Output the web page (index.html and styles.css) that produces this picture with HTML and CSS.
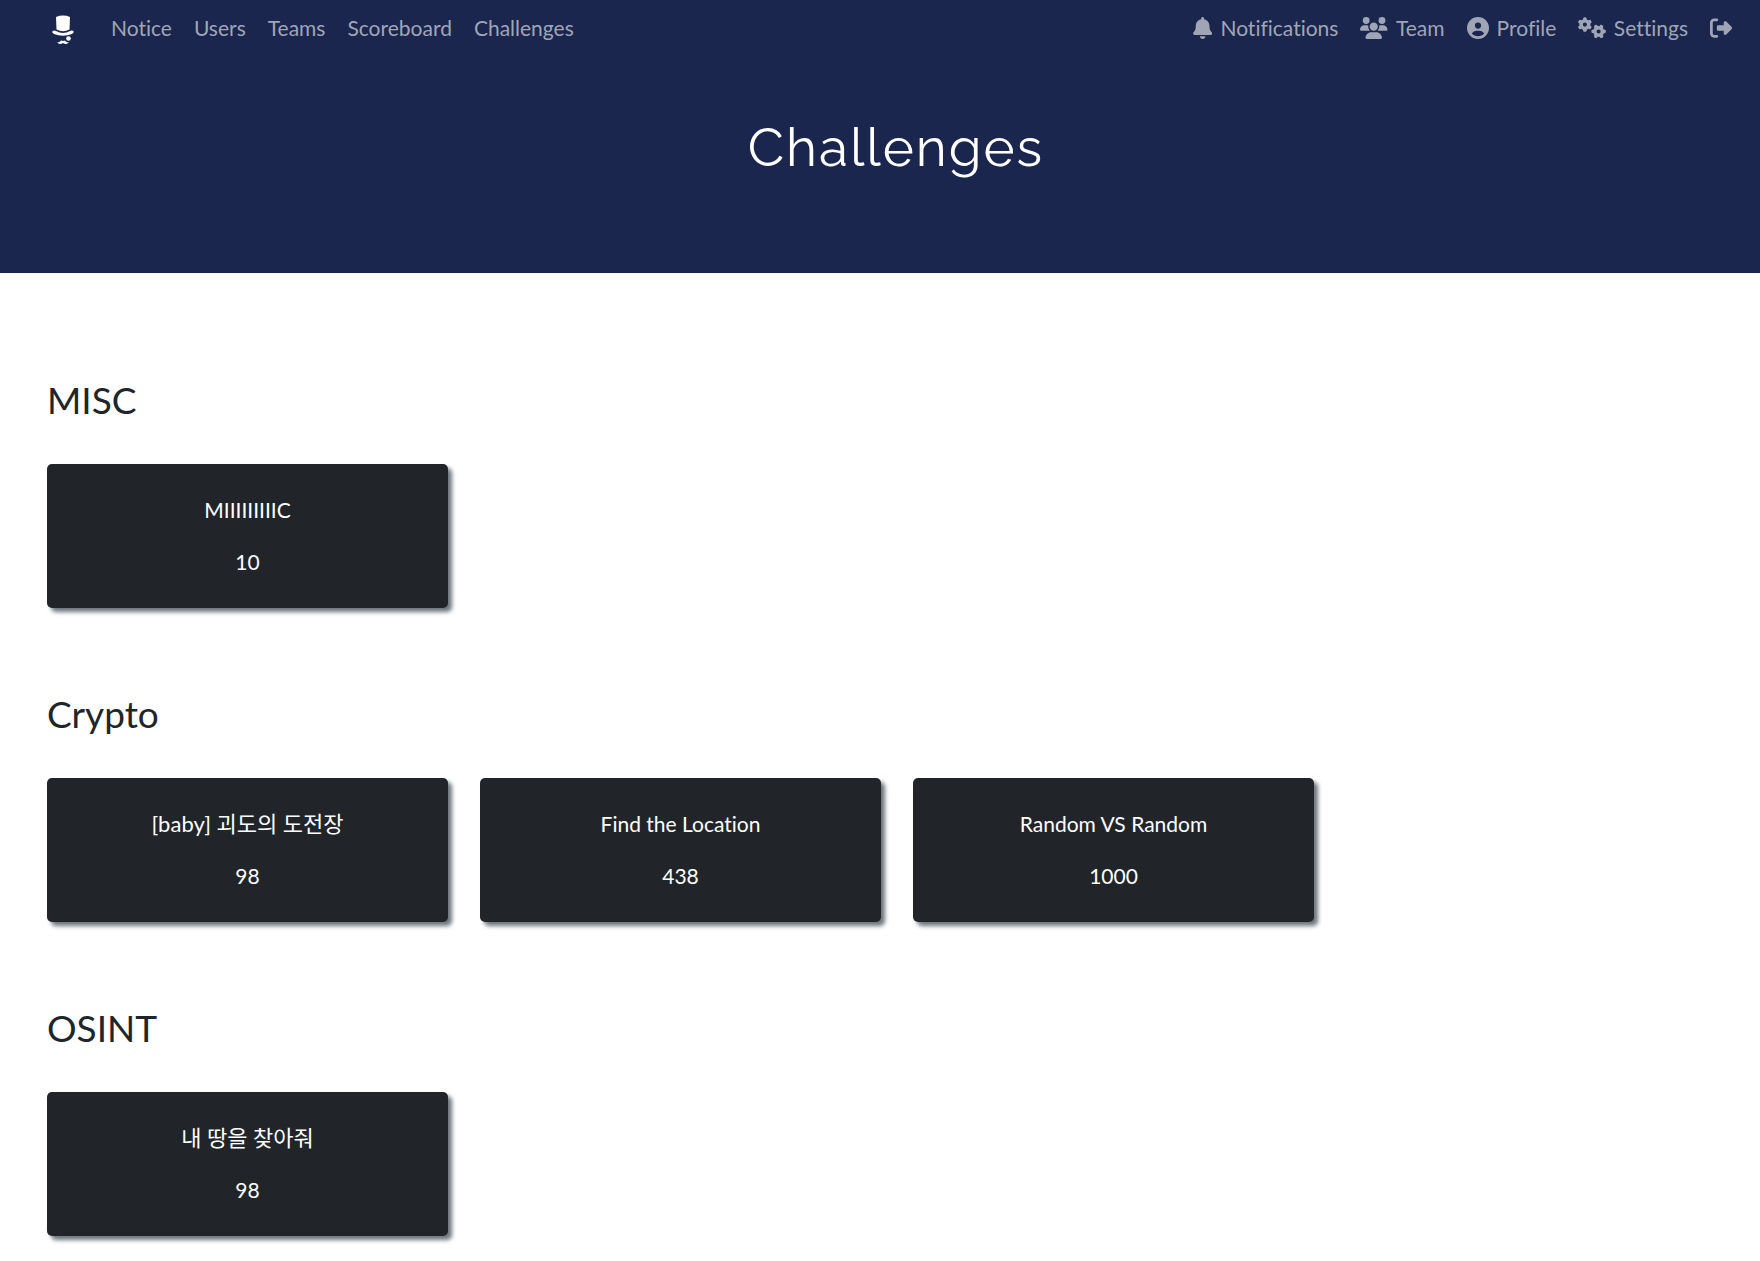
FILE: index.html
```html
<!DOCTYPE html>
<html lang="en">
<head>
<meta charset="utf-8">
<meta name="viewport" content="width=device-width, initial-scale=1">
<title>Challenges</title>
<link rel="stylesheet" href="styles.css">
</head>
<body>
<header class="masthead">
  <nav class="navbar" aria-label="Main">
    <a class="brand" href="#" aria-label="Home">
      <svg class="brand-logo" viewBox="0 -2 24 32" aria-hidden="true">
        <path d="M5 3Q12 .2 19 3L18.500 15.500Q12 19 5.500 15.500Z"/>
        <path d="M1.500 17Q3.500 16 5 17Q12 21 19 17Q20.500 16 22.500 17Q23.500 18.500 21 20Q12 23.500 3 20Q.5 18.500 1.500 17Z"/>
        <circle cx="17.500" cy="24.500" r="2.300"/>
        <path d="M6 28.500Q8.500 28.500 9.500 27Q11 26 12 27.300Q13 26 14.500 27Q15.500 28.500 18 28.500Q15.500 31 12 29Q8.500 31 6 28.500Z"/>
      </svg>
    </a>
    <ul class="nav-list">
      <li><a class="nav-link" href="#">Notice</a></li>
      <li><a class="nav-link" href="#">Users</a></li>
      <li><a class="nav-link" href="#">Teams</a></li>
      <li><a class="nav-link" href="#">Scoreboard</a></li>
      <li><a class="nav-link" href="#">Challenges</a></li>
    </ul>
    <ul class="nav-list nav-account">
      <li><a class="nav-link" href="#"><svg class="icon" viewBox="0 0 448 512" aria-hidden="true"><path d="M224 0c-17.700 0-32 14.300-32 32V51.200C119 66 64 130.600 64 208v18.800c0 47-17.300 92.400-48.500 127.600l-7.400 8.300c-8.400 9.400-10.400 22.900-5.300 34.400S19.400 416 32 416H416c12.600 0 24-7.400 29.200-18.900s3.100-25-5.300-34.400l-7.400-8.300C401.300 319.200 384 273.900 384 226.800V208c0-77.400-55-142-128-156.800V32c0-17.700-14.300-32-32-32zm45.300 493.300c12-12 18.700-28.300 18.700-45.300H224 160c0 17 6.700 33.300 18.700 45.300s28.300 18.700 45.300 18.700s33.300-6.700 45.300-18.700z"/></svg>Notifications</a></li>
      <li><a class="nav-link" href="#"><svg class="icon" viewBox="0 0 640 512" aria-hidden="true"><path d="M144 0a80 80 0 1 1 0 160A80 80 0 1 1 144 0zM512 0a80 80 0 1 1 0 160A80 80 0 1 1 512 0zM0 298.700C0 239.800 47.800 192 106.700 192h42.700c15.900 0 31 3.500 44.600 9.700c-1.300 7.200-1.900 14.700-1.900 22.300c0 38.200 16.800 72.500 43.300 96c-.2 0-.4 0-.7 0H21.300C9.600 320 0 310.400 0 298.700zM405.300 320c-.2 0-.4 0-.7 0c26.600-23.500 43.300-57.800 43.300-96c0-7.600-.7-15-1.900-22.300c13.600-6.300 28.700-9.700 44.600-9.700h42.700C592.200 192 640 239.800 640 298.700c0 11.800-9.600 21.300-21.300 21.300H405.300zM224 224a96 96 0 1 1 192 0 96 96 0 1 1 -192 0zM128 485.300C128 411.700 187.700 352 261.300 352H378.700C452.300 352 512 411.700 512 485.300c0 14.700-11.900 26.700-26.700 26.700H154.700c-14.700 0-26.700-11.900-26.700-26.700z"/></svg>Team</a></li>
      <li><a class="nav-link" href="#"><svg class="icon" viewBox="0 0 512 512" aria-hidden="true"><path d="M399 384.200C376.900 345.800 335.400 320 288 320H224c-47.400 0-88.900 25.800-111 64.200c35.200 39.200 86.200 63.800 143 63.800s107.800-24.700 143-63.800zM0 256a256 256 0 1 1 512 0A256 256 0 1 1 0 256zm256 16a72 72 0 1 0 0-144 72 72 0 1 0 0 144z"/></svg>Profile</a></li>
      <li><a class="nav-link" href="#"><svg class="icon" viewBox="0 0 640 512" aria-hidden="true">
        <defs>
          <path id="gear" d="M308.500 135.300c7.100-6.300 9.900-16.200 6.200-25c-2.300-5.300-4.800-10.500-7.600-15.500L304 89.400c-3-5-6.300-9.900-9.800-14.600c-5.700-7.600-15.700-10.100-24.700-7.100l-28.200 9.300c-10.700-8.800-23-16-36.200-20.900L199 27.100c-1.900-9.300-9.100-16.700-18.500-17.800C173.900 8.400 167.200 8 160.400 8h-.7c-6.800 0-13.500 .4-20.100 1.200c-9.400 1.100-16.600 8.600-18.500 17.800L115 56.100c-13.300 5-25.500 12.100-36.200 20.900L50.500 67.800c-9-3-19-.5-24.700 7.100c-3.500 4.700-6.800 9.600-9.900 14.600l-3 5.300c-2.800 5-5.300 10.200-7.600 15.600c-3.700 8.700-.9 18.600 6.200 25l22.200 19.800C32.600 161.900 32 168.900 32 176s.6 14.100 1.700 20.900L11.500 216.700c-7.100 6.300-9.900 16.200-6.200 25c2.300 5.300 4.800 10.500 7.600 15.600l3 5.200c3 5.100 6.300 9.900 9.900 14.600c5.700 7.600 15.700 10.100 24.700 7.100l28.200-9.300c10.700 8.800 23 16 36.200 20.900l6.100 29.100c1.900 9.300 9.100 16.700 18.500 17.800c6.700 .8 13.500 1.200 20.400 1.200s13.700-.4 20.400-1.200c9.400-1.100 16.600-8.600 18.500-17.800l6.100-29.100c13.300-5 25.500-12.100 36.200-20.900l28.200 9.300c9 3 19 .5 24.700-7.100c3.500-4.700 6.800-9.500 9.800-14.600l3.100-5.400c2.800-5 5.300-10.200 7.600-15.500c3.700-8.700 .9-18.600-6.200-25l-22.200-19.800c1.100-6.800 1.700-13.800 1.700-20.900s-.6-14.100-1.700-20.900l22.200-19.800zM112 176a48 48 0 1 1 96 0 48 48 0 1 1 -96 0z"/>
        </defs>
        <use href="#gear"/>
        <use href="#gear" transform="translate(480 336) rotate(90) translate(-160 -176)"/>
      </svg>Settings</a></li>
      <li><a class="nav-link" href="#" aria-label="Logout"><svg class="icon" viewBox="0 0 512 512" aria-hidden="true"><path d="M377.900 105.900L500.700 228.700c7.200 7.200 11.300 17.100 11.300 27.300s-4.100 20.100-11.300 27.300L377.900 406.100c-6.400 6.400-15 9.900-24 9.900c-18.700 0-33.900-15.200-33.900-33.900l0-62.100-128 0c-17.700 0-32-14.300-32-32l0-64c0-17.700 14.300-32 32-32l128 0 0-62.100c0-18.700 15.200-33.900 33.900-33.900c9 0 17.600 3.600 24 9.900zM160 96L96 96c-17.700 0-32 14.300-32 32l0 256c0 17.700 14.300 32 32 32l64 0c17.700 0 32 14.300 32 32s-14.300 32-32 32l-64 0c-53 0-96-43-96-96L0 128C0 75 43 32 96 32l64 0c17.700 0 32 14.300 32 32s-14.300 32-32 32z"/></svg></a></li>
    </ul>
  </nav>
  <h1 class="page-title">Challenges</h1>
</header>
<main class="board">
  <section class="category">
    <h2 class="category-name">MISC</h2>
    <div class="cards">
      <button class="card" type="button"><span>MIIIIIIIIIC</span><span>10</span></button>
    </div>
  </section>
  <section class="category">
    <h2 class="category-name">Crypto</h2>
    <div class="cards">
      <button class="card" type="button"><span lang="ko">[baby] 괴도의 도전장</span><span>98</span></button>
      <button class="card" type="button"><span>Find the Location</span><span>438</span></button>
      <button class="card" type="button"><span>Random VS Random</span><span>1000</span></button>
    </div>
  </section>
  <section class="category">
    <h2 class="category-name">OSINT</h2>
    <div class="cards">
      <button class="card" type="button"><span lang="ko">내 땅을 찾아줘</span><span>98</span></button>
    </div>
  </section>
</main>
</body>
</html>
```
FILE: styles.css
```css
* {
  box-sizing: border-box;
}

body {
  margin: 0;
  background: #fff;
  color: #212529;
  font-family: Lato, "Noto Sans CJK KR", sans-serif;
  font-size: 21px;
  font-variant-ligatures: none;
  line-height: 32px;
}

.masthead {
  background: #1a264d;
  padding-bottom: 93px;
}

.navbar {
  display: flex;
  align-items: center;
  height: 56px;
  padding: 0 28px 0 51px;
}

.brand {
  display: flex;
  margin-right: 36px;
}

.brand-logo {
  width: 24px;
  height: 32px;
  fill: #fff;
}

.nav-list {
  display: flex;
  gap: 22px;
  margin: 0;
  padding: 0;
  list-style: none;
}

.nav-account {
  margin-left: auto;
}

.nav-link {
  display: flex;
  align-items: center;
  gap: 8px;
  min-height: 32px;
  color: #a0a5b6;
  text-decoration: none;
}

.icon {
  height: 22px;
  fill: currentColor;
}

.page-title {
  margin: 59px 0 0;
  padding-left: 32px;
  color: #fff;
  font-family: Raleway, Inter, sans-serif;
  font-size: 53px;
  font-weight: 400;
  letter-spacing: 2px;
  line-height: 65px;
  text-align: center;
}

.board {
  padding: 104px 13px 24px 47px;
}

.category {
  margin-bottom: 83px;
}

.category:last-child {
  margin-bottom: 0;
}

.category-name {
  margin: 0 0 41px;
  font-size: 37px;
  font-weight: 400;
  line-height: 46px;
}

.cards {
  display: grid;
  grid-template-columns: repeat(4, 1fr);
  gap: 32px;
}

.card {
  display: flex;
  flex-direction: column;
  align-items: center;
  gap: 20px;
  padding: 30px 16px;
  border: 0;
  border-radius: 5px;
  background: #212529;
  box-shadow: 4px 4px 4px #6c757d;
  color: #fff;
  font-family: inherit;
  font-size: 21px;
  font-variant-ligatures: none;
  line-height: 32px;
}

.card [lang="ko"] {
  font-size: 22px;
}
```
